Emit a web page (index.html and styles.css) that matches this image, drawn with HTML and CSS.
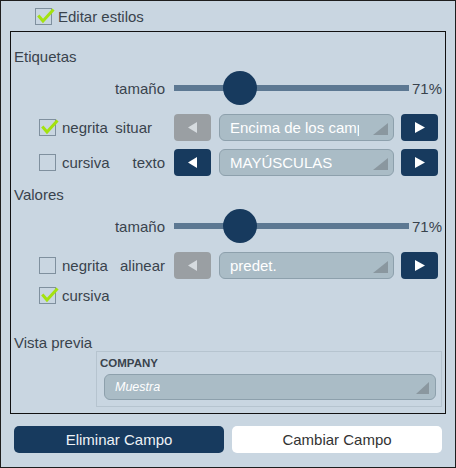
FILE: index.html
```html
<!DOCTYPE html>
<html lang="es">
<head>
<meta charset="utf-8">
<title>Editar estilos</title>
<link rel="stylesheet" href="styles.css">
</head>
<body>
<div class="app">
  <div class="header">
    <span class="cb"><svg class="check" width="21" height="17" viewBox="0 0 21 17"><path d="M3.3 7.5 L8 13 L18.5 1.5"/></svg></span>
    <span>Editar estilos</span>
  </div>
  <div class="panel">
    <div class="section-title">Etiquetas</div>
    <div class="slider-row">
      <span class="slider-label">tamaño</span>
      <div class="track"><span class="thumb"></span></div>
      <span class="pct">71%</span>
    </div>
    <div class="opt-row">
      <div class="cb-group"><span class="cb"><svg class="check" width="21" height="17" viewBox="0 0 21 17"><path d="M3.3 7.5 L8 13 L18.5 1.5"/></svg></span><span>negrita</span></div>
      <span class="opt-label opt-label--inset">situar</span>
      <button class="arrow arrow--disabled"><svg width="9" height="11" viewBox="0 0 9 11"><path d="M9 0L0 5.5L9 11Z"/></svg></button>
      <div class="select"><span class="select-text">Encima de los campos</span><span class="corner"></span></div>
      <button class="arrow arrow--next"><svg width="10" height="11" viewBox="0 0 10 11"><path d="M0 0L10 5.5L0 11Z"/></svg></button>
    </div>
    <div class="opt-row">
      <div class="cb-group"><span class="cb"></span><span>cursiva</span></div>
      <span class="opt-label">texto</span>
      <button class="arrow"><svg width="9" height="11" viewBox="0 0 9 11"><path d="M9 0L0 5.5L9 11Z"/></svg></button>
      <div class="select"><span class="select-text">MAYÚSCULAS</span><span class="corner"></span></div>
      <button class="arrow arrow--next"><svg width="10" height="11" viewBox="0 0 10 11"><path d="M0 0L10 5.5L0 11Z"/></svg></button>
    </div>
    <div class="section-title section-title--gap">Valores</div>
    <div class="slider-row">
      <span class="slider-label">tamaño</span>
      <div class="track"><span class="thumb"></span></div>
      <span class="pct">71%</span>
    </div>
    <div class="opt-row">
      <div class="cb-group"><span class="cb"></span><span>negrita</span></div>
      <span class="opt-label">alinear</span>
      <button class="arrow arrow--disabled"><svg width="9" height="11" viewBox="0 0 9 11"><path d="M9 0L0 5.5L9 11Z"/></svg></button>
      <div class="select"><span class="select-text">predet.</span><span class="corner"></span></div>
      <button class="arrow arrow--next"><svg width="10" height="11" viewBox="0 0 10 11"><path d="M0 0L10 5.5L0 11Z"/></svg></button>
    </div>
    <div class="opt-row opt-row--tight">
      <div class="cb-group"><span class="cb"><svg class="check" width="21" height="17" viewBox="0 0 21 17"><path d="M3.3 7.5 L8 13 L18.5 1.5"/></svg></span><span>cursiva</span></div>
    </div>
    <div class="section-title section-title--preview">Vista previa</div>
    <div class="preview">
      <div class="preview-label">COMPANY</div>
      <div class="select select--preview"><span class="select-text">Muestra</span><span class="corner corner--preview"></span></div>
    </div>
  </div>
  <div class="actions">
    <button class="action action--primary">Eliminar Campo</button>
    <button class="action action--secondary">Cambiar Campo</button>
  </div>
</div>
</body>
</html>
```
FILE: styles.css
```css
* { box-sizing: border-box; }
body {
  margin: 0;
  font-family: "Liberation Sans", Arial, sans-serif;
  font-size: 15px;
  color: #39434d;
}
.app {
  width: 456px;
  height: 468px;
  border: 1px solid #1e1e1e;
  background: #c9d6e1;
}
.header {
  display: flex;
  align-items: center;
  gap: 6px;
  height: 30px;
  padding-left: 34px;
}
.cb {
  position: relative;
  flex: none;
  width: 17px;
  height: 17px;
  border: 1px solid #7f909e;
}
.check {
  position: absolute;
  left: -1px;
  top: -1px;
  overflow: visible;
}
.check path {
  fill: none;
  stroke: #a4e20f;
  stroke-width: 3;
  stroke-linecap: butt;
  stroke-linejoin: miter;
}
.panel {
  margin: 0 9px;
  border: 1px solid #111;
  padding: 15px 3px 6px 3px;
}
.section-title {
  line-height: 20px;
}
.section-title--gap { margin-top: 9px; }
.section-title--preview { margin-top: 25px; line-height: 17px; }
.slider-row {
  display: flex;
  align-items: center;
  height: 36px;
  margin-top: 3px;
}
.slider-label {
  width: 151px;
  text-align: right;
}
.track {
  position: relative;
  margin-left: 9px;
  width: 235px;
  height: 6px;
  background: #5c7892;
}
.thumb {
  position: absolute;
  left: 49px;
  top: 50%;
  width: 34px;
  height: 34px;
  margin-top: -17px;
  border-radius: 50%;
  background: #173a5e;
}
.pct { margin-left: 3px; }
.opt-row {
  display: flex;
  align-items: center;
  height: 27px;
  margin-top: 8px;
  padding-left: 25px;
}
.opt-row--tight { margin-top: 3px; }
.cb-group {
  display: flex;
  align-items: center;
  gap: 6px;
  width: 71px;
}
.opt-label {
  width: 55px;
  text-align: right;
}
.opt-label--inset { padding-right: 13px; }
.arrow {
  display: flex;
  align-items: center;
  justify-content: center;
  margin-left: 9px;
  width: 37px;
  height: 27px;
  padding: 0;
  border: 0;
  border-radius: 4px;
  background: #173a5e;
}
.arrow svg { fill: #fff; }
.arrow--disabled { background: #9a9fa3; }
.arrow--disabled svg { fill: #d6dbdf; }
.arrow--next { margin-left: 7px; }
.select {
  position: relative;
  display: flex;
  align-items: center;
  margin-left: 8px;
  width: 175px;
  height: 27px;
  padding: 0 34px 0 10px;
  border: 1px solid #8da0ac;
  border-radius: 6px;
  background: #aabcc6;
  color: #fff;
  font-size: 15px;
  overflow: hidden;
}
.select-text {
  white-space: nowrap;
  overflow: hidden;
}
.corner {
  position: absolute;
  right: 5px;
  bottom: 5px;
  width: 15px;
  height: 12px;
  background: #8a979f;
  clip-path: polygon(100% 0, 100% 100%, 0 100%);
}
.preview {
  margin-left: 82px;
  height: 56px;
  padding: 4px 4px 0 3px;
  border: 1px solid #b6c4cf;
}
.preview-label {
  font-size: 11.5px;
  font-weight: bold;
  line-height: 14px;
}
.select--preview {
  margin: 4px 0 0 4px;
  width: 332px;
  height: 26px;
  font-size: 12.5px;
  font-style: italic;
  padding-left: 10px;
}
.corner--preview {
  right: 6px;
  bottom: 5px;
  width: 13px;
  height: 12px;
}
.actions {
  display: flex;
  gap: 8px;
  padding: 12px 13px 0;
}
.action {
  width: 210px;
  height: 27px;
  border: 0;
  border-radius: 5px;
  font-family: "Liberation Sans", Arial, sans-serif;
  font-size: 15px;
}
.action--primary { background: #173a5e; color: #eef2f6; }
.action--secondary { background: #fff; color: #333; }
```
